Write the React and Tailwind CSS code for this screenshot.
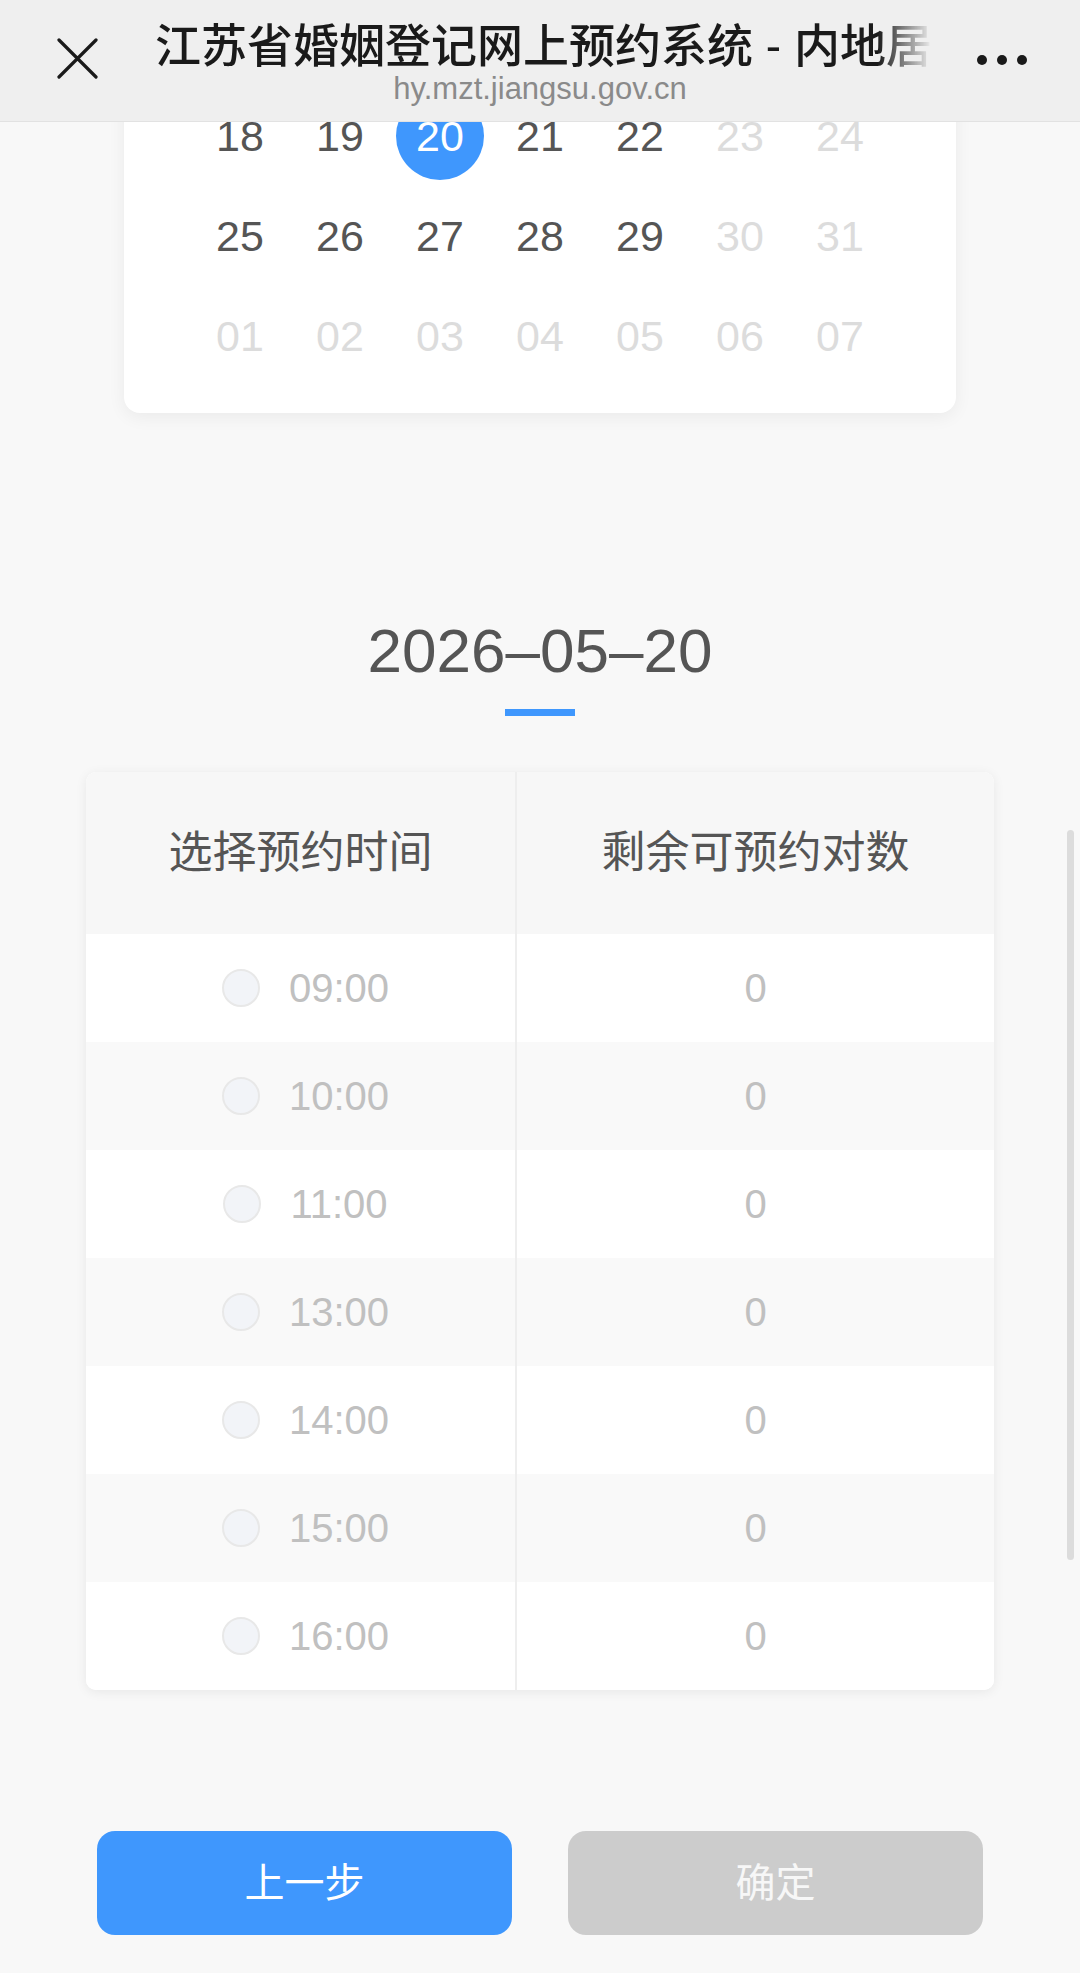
import React from 'react';

const font = "font-['Liberation_Sans','Noto_Sans_CJK_SC',sans-serif]";

const weeks = [
    [{ d: '18' }, { d: '19' }, { d: '20', sel: true }, { d: '21' }, { d: '22' }, { d: '23', off: true }, { d: '24', off: true }],
    [{ d: '25' }, { d: '26' }, { d: '27' }, { d: '28' }, { d: '29' }, { d: '30', off: true }, { d: '31', off: true }],
    [{ d: '01', off: true }, { d: '02', off: true }, { d: '03', off: true }, { d: '04', off: true }, { d: '05', off: true }, { d: '06', off: true }, { d: '07', off: true }],
];

const slots = ['09:00', '10:00', '11:00', '13:00', '14:00', '15:00', '16:00'];

function Header() {
    return (
        <div className="absolute top-0 left-0 right-0 z-10 h-[122px] bg-[#efefef] border-b border-[#e2e2e2] flex items-start">
            <div className="w-[155px] h-full flex items-start pl-[57px] pt-[38px]">
                <svg width="41" height="41" viewBox="0 0 41 41">
                    <path d="M2 2 L39 39 M39 2 L2 39" stroke="#1a1a1a" strokeWidth="3.2" strokeLinecap="round" />
                </svg>
            </div>
            <div className="flex-1 min-w-0 flex flex-col">
                <div className="h-[70px] whitespace-nowrap pt-[19px]">
                    <span className="inline-block text-[46px] leading-[54px] font-medium text-[#1a1a1a] [mask-image:linear-gradient(to_right,black_93%,transparent_100%)]">江苏省婚姻登记网上预约系统 - 内地居</span>
                </div>
                <div className="-ml-[155px] w-[1080px] text-center text-[31px] leading-[34px] text-[#8a8a8a] mt-[2px]">hy.mzt.jiangsu.gov.cn</div>
            </div>
            <div className="w-[122px] h-full flex items-start justify-center gap-[10px] pt-[55px] pr-[34px]">
                <span className="w-[10px] h-[10px] shrink-0 rounded-full bg-[#1a1a1a]"></span>
                <span className="w-[10px] h-[10px] shrink-0 rounded-full bg-[#1a1a1a]"></span>
                <span className="w-[10px] h-[10px] shrink-0 rounded-full bg-[#1a1a1a]"></span>
            </div>
        </div>
    );
}

export default function App() {
    return (
        <div className={`relative w-[1080px] h-[1973px] overflow-hidden bg-[#f8f8f8] ${font}`}>
            <Header />

            {/* calendar card, scrolled so its top sits under the bar */}
            <div className="mx-auto w-[832px] bg-white rounded-b-[16px] shadow-[0_4px_18px_rgba(0,0,0,0.06)] pt-[86px] pb-[27px]">
                {weeks.map((week, i) => (
                    <div key={i} className="mx-auto w-[700px] grid grid-cols-7 h-[100px]">
                        {week.map((day) => (
                            <div key={day.d} className="flex items-center justify-center">
                                {day.sel ? (
                                    <div className="w-[88px] h-[88px] rounded-full bg-[#3f97fd] flex items-center justify-center text-white text-[43px]">{day.d}</div>
                                ) : (
                                    <span className={`text-[43px] ${day.off ? 'text-[#dcdcdc]' : 'text-[#555555]'}`}>{day.d}</span>
                                )}
                            </div>
                        ))}
                    </div>
                ))}
            </div>

            <div className="mt-[202px] text-center text-[62px] leading-[72px] text-[#555555]">2026–05–20</div>
            <div className="mx-auto mt-[22px] w-[70px] h-[7px] bg-[#3f97fd]"></div>

            {/* time slot table */}
            <div className="mx-auto mt-[56px] w-[908px] rounded-[10px] overflow-hidden bg-white shadow-[0_2px_12px_rgba(0,0,0,0.07)]">
                <div className="flex h-[162px] bg-[#f7f7f7]">
                    <div className="w-[431px] flex items-center justify-center text-[44px] text-[#555555] border-r-2 border-[#eeeeee]">选择预约时间</div>
                    <div className="flex-1 flex items-center justify-center text-[44px] text-[#555555]">剩余可预约对数</div>
                </div>
                {slots.map((t, i) => (
                    <div key={t} className={`flex h-[108px] ${i % 2 === 1 ? 'bg-[#f9f9f9]' : 'bg-white'}`}>
                        <div className="w-[431px] flex items-center justify-center gap-[29px] border-r-2 border-[#eeeeee] pl-[10px]">
                            <span className="w-[38px] h-[38px] rounded-full bg-[#f2f4f8] border-2 border-[#e8e8e8]"></span>
                            <span className="text-[40px] text-[#c0c0c0]">{t}</span>
                        </div>
                        <div className="flex-1 flex items-center justify-center text-[40px] text-[#c0c0c0]">0</div>
                    </div>
                ))}
            </div>

            <div className="mt-[141px] flex justify-center gap-[56px]">
                <button className="w-[415px] h-[104px] rounded-[18px] bg-[#3f97fd] text-white text-[40px]">上一步</button>
                <button className="w-[415px] h-[104px] rounded-[18px] bg-[#cccccc] text-[#f7f7f7] text-[40px]">确定</button>
            </div>

            {/* overlay scrollbar */}
            <div className="absolute right-[6px] top-[830px] w-[7px] h-[730px] rounded-full bg-[#dcdcdc]"></div>
        </div>
    );
}
